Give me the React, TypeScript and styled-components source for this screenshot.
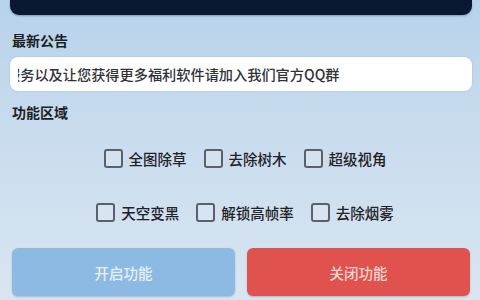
import React from "react";
import styled, { createGlobalStyle } from "styled-components";

const Global = createGlobalStyle`
  html, body { margin: 0; padding: 0; }
  body { font-family: "Noto Sans CJK SC", "Noto Sans", sans-serif; }
`;

const Page = styled.div`
  width: 480px;
  height: 300px;
  overflow: hidden;
  box-sizing: border-box;
  padding: 0 8px 0 10px;
  display: flex;
  flex-direction: column;
  background: linear-gradient(180deg, #b7d2ea 0%, #c9dcee 45%, #d9e6f1 100%);
`;

const TopCard = styled.div`
  height: 15px;
  flex: none;
  background: #0b1832;
  border-radius: 0 0 9px 9px;
  box-shadow: 0 1px 2px rgba(20, 40, 80, 0.35);
`;

const SectionTitle = styled.div<{ $top: number }>`
  margin-top: ${(p) => p.$top}px;
  padding-left: 2px;
  height: 20px;
  line-height: 20px;
  font-size: 14px;
  font-weight: 700;
  color: #1c1f24;
`;

const Notice = styled.div`
  margin-top: 7px;
  height: 34px;
  flex: none;
  background: #ffffff;
  border-radius: 8px;
  padding: 0 8px;
  display: flex;
  align-items: center;
  box-shadow: 0 0 2px rgba(120, 150, 180, 0.4);
`;

const Track = styled.div`
  flex: 1;
  overflow: hidden;
  white-space: nowrap;
`;

const MarqueeText = styled.span`
  display: inline-block;
  font-size: 14.2px;
  font-weight: 500;
  color: #2f3237;
  line-height: 34px;
`;

const Options = styled.div`
  margin-top: 24px;
  padding-left: 8px;
  display: flex;
  flex-direction: column;
  gap: 30px;
`;

const OptionRow = styled.div`
  display: flex;
  justify-content: center;
  gap: 17px;
  height: 24px;
  align-items: center;
`;

const Option = styled.label`
  display: flex;
  align-items: center;
  gap: 6px;
  font-size: 14.5px;
  font-weight: 500;
  color: #1f2227;
`;

const Box = styled.span`
  width: 19px;
  height: 19px;
  box-sizing: border-box;
  border: 2px solid #5b6169;
  border-radius: 3px;
  background: rgba(255, 255, 255, 0.15);
`;

const Buttons = styled.div`
  margin-top: 24px;
  padding: 0 2px;
  display: flex;
  gap: 12px;
`;

const ActionButton = styled.button<{ $variant: "on" | "off" }>`
  flex: 1;
  height: 48px;
  border: none;
  border-radius: 6px;
  font-family: "Noto Sans CJK SC", "Noto Sans", sans-serif;
  font-size: 14.5px;
  font-weight: 500;
  background: ${(p) => (p.$variant === "on" ? "#8dbae3" : "#df524d")};
  color: ${(p) => (p.$variant === "on" ? "#e6f0fa" : "#f7d6d2")};
  box-shadow: 0 1px 2px rgba(60, 80, 110, 0.3);
`;

const row1 = ["全图除草", "去除树木", "超级视角"];
const row2 = ["天空变黑", "解锁高帧率", "去除烟雾"];

export default function App() {
  return (
    <>
      <Global />
      <Page>
        <TopCard />
        <SectionTitle $top={15}>最新公告</SectionTitle>
        <Notice>
          <Track>
            <MarqueeText style={{ marginLeft: -12 }}>
              服务以及让您获得更多福利软件请加入我们官方QQ群
            </MarqueeText>
          </Track>
        </Notice>
        <SectionTitle $top={11}>功能区域</SectionTitle>
        <Options>
          <OptionRow>
            {row1.map((t) => (
              <Option key={t}>
                <Box />
                {t}
              </Option>
            ))}
          </OptionRow>
          <OptionRow>
            {row2.map((t) => (
              <Option key={t}>
                <Box />
                {t}
              </Option>
            ))}
          </OptionRow>
        </Options>
        <Buttons>
          <ActionButton $variant="on">开启功能</ActionButton>
          <ActionButton $variant="off">关闭功能</ActionButton>
        </Buttons>
      </Page>
    </>
  );
}
